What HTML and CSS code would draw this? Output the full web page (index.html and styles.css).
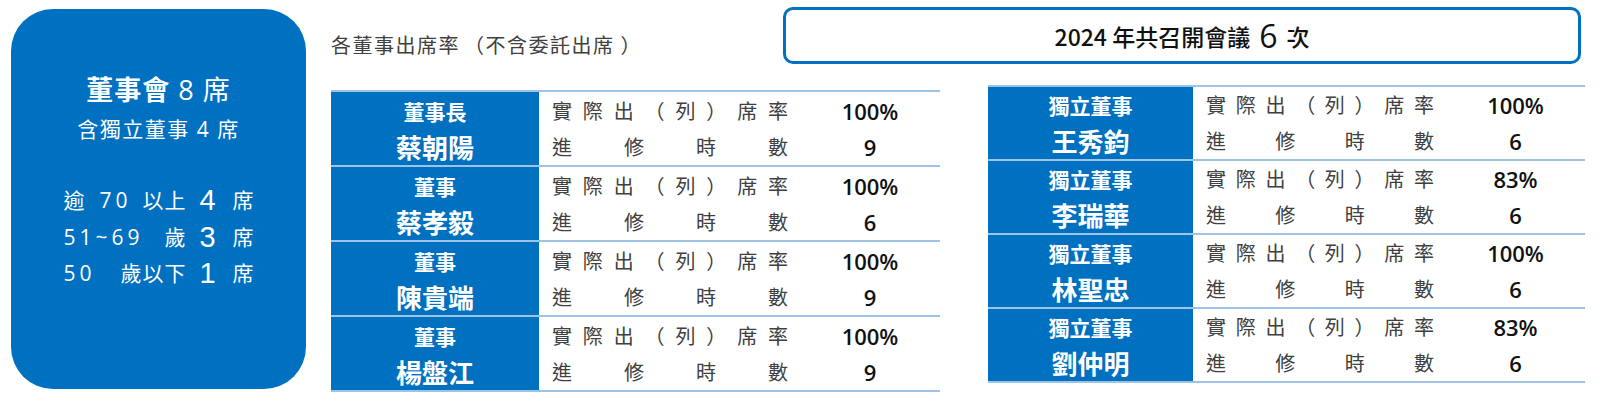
FILE: index.html
```html
<!DOCTYPE html>
<html lang="zh-Hant">
<head>
<meta charset="utf-8">
<title>董事會出席率</title>
<link rel="stylesheet" href="styles.css">
</head>
<body>
<div class="page">
  <section class="card">
    <div class="card-title"><span class="strong">董事會</span> 8 席</div>
    <div class="card-sub">含獨立董事 4 席</div>
    <div class="age-grid">
      <div class="age-label"><span>逾</span><span>70</span><span>以上</span></div>
      <div class="age-num">4</div>
      <div class="age-unit">席</div>
      <div class="age-label"><span>51~69</span><span>歲</span></div>
      <div class="age-num">3</div>
      <div class="age-unit">席</div>
      <div class="age-label"><span>50</span><span>歲以下</span></div>
      <div class="age-num">1</div>
      <div class="age-unit">席</div>
    </div>
  </section>

  <main class="main">
    <div class="top-row">
      <h2 class="caption">各董事出席率<span class="paren-open">（</span>不含委託出席<span class="paren-close">）</span></h2>
      <div class="meeting-box"><span>2024 年共召開會議</span><span class="big">6</span><span>次</span></div>
    </div>

    <div class="tables">
      <div class="table table-left">
        <div class="row">
          <div class="who"><div class="role">董事長</div><div class="name">蔡朝陽</div></div>
          <div class="labels"><div class="lab">實際出（列）席率</div><div class="lab">進修時數</div></div>
          <div class="vals"><div>100%</div><div>9</div></div>
        </div>
        <div class="row">
          <div class="who"><div class="role">董事</div><div class="name">蔡孝毅</div></div>
          <div class="labels"><div class="lab">實際出（列）席率</div><div class="lab">進修時數</div></div>
          <div class="vals"><div>100%</div><div>6</div></div>
        </div>
        <div class="row">
          <div class="who"><div class="role">董事</div><div class="name">陳貴端</div></div>
          <div class="labels"><div class="lab">實際出（列）席率</div><div class="lab">進修時數</div></div>
          <div class="vals"><div>100%</div><div>9</div></div>
        </div>
        <div class="row">
          <div class="who"><div class="role">董事</div><div class="name">楊盤江</div></div>
          <div class="labels"><div class="lab">實際出（列）席率</div><div class="lab">進修時數</div></div>
          <div class="vals"><div>100%</div><div>9</div></div>
        </div>
      </div>

      <div class="table table-right">
        <div class="row">
          <div class="who"><div class="role">獨立董事</div><div class="name">王秀鈞</div></div>
          <div class="labels"><div class="lab">實際出（列）席率</div><div class="lab">進修時數</div></div>
          <div class="vals"><div>100%</div><div>6</div></div>
        </div>
        <div class="row">
          <div class="who"><div class="role">獨立董事</div><div class="name">李瑞華</div></div>
          <div class="labels"><div class="lab">實際出（列）席率</div><div class="lab">進修時數</div></div>
          <div class="vals"><div>83%</div><div>6</div></div>
        </div>
        <div class="row">
          <div class="who"><div class="role">獨立董事</div><div class="name">林聖忠</div></div>
          <div class="labels"><div class="lab">實際出（列）席率</div><div class="lab">進修時數</div></div>
          <div class="vals"><div>100%</div><div>6</div></div>
        </div>
        <div class="row">
          <div class="who"><div class="role">獨立董事</div><div class="name">劉仲明</div></div>
          <div class="labels"><div class="lab">實際出（列）席率</div><div class="lab">進修時數</div></div>
          <div class="vals"><div>83%</div><div>6</div></div>
        </div>
      </div>
    </div>
  </main>
</div>
</body>
</html>
```

FILE: styles.css
```css
html, body {
  margin: 0;
  padding: 0;
  background: #ffffff;
}

body {
  font-family: "Noto Sans CJK TC", "Noto Sans", sans-serif;
  color: #404040;
}

.page {
  display: flex;
  align-items: flex-start;
  padding: 7px 0 0 11px;
}

/* ---------- left card ---------- */
.card {
  box-sizing: border-box;
  width: 295px;
  height: 380px;
  margin-top: 2px;
  border-radius: 42px;
  background: #0070c0;
  color: #ffffff;
  display: flex;
  flex-direction: column;
  align-items: center;
  padding-top: 62px;
  font-family: "Open Sans", "Noto Sans CJK TC", sans-serif;
}

.card-title {
  font-size: 27px;
  line-height: 36px;
  letter-spacing: 1px;
}

.card-title .strong {
  font-family: "Noto Sans CJK TC", sans-serif;
  font-weight: 700;
}

.card-sub {
  margin-top: 7px;
  font-size: 21px;
  line-height: 28px;
  letter-spacing: 1.5px;
}

.age-grid {
  margin-top: 39px;
  display: grid;
  grid-template-columns: 123px 42px auto;
  grid-auto-rows: 36.5px;
  align-items: center;
  font-size: 21px;
  line-height: 30px;
}

.age-label {
  display: flex;
  justify-content: space-between;
  letter-spacing: 4px;
}

.age-label span:last-child {
  letter-spacing: 1px;
}

.age-num {
  text-align: center;
  font-family: "Liberation Sans", sans-serif;
  font-size: 29px;
  font-weight: 400;
  line-height: 30px;
}

.age-unit {
  margin-left: 4px;
}

/* ---------- main area ---------- */
.main {
  margin-left: 25px;
  width: 1254px;
}

.top-row {
  display: grid;
  grid-template-columns: 452px 798px;
  height: 57px;
}

.caption {
  margin: 0;
  padding-top: 24px;
  font-size: 20px;
  line-height: 28px;
  font-weight: 400;
  letter-spacing: 1.5px;
  color: #404040;
}

.paren-open {
  margin-left: 4px;
}

.paren-close {
  margin-left: 6px;
}

.meeting-box {
  box-sizing: border-box;
  height: 57px;
  border: 3px solid #0070c0;
  border-radius: 10px;
  display: flex;
  align-items: center;
  justify-content: center;
  gap: 9px;
  font-size: 23px;
  font-weight: 500;
  color: #111111;
}

.meeting-box .big {
  font-family: "Open Sans", sans-serif;
  font-size: 32px;
  font-weight: 500;
  line-height: 1;
}

.tables {
  display: grid;
  grid-template-columns: 609px 597px;
  column-gap: 48px;
  align-items: start;
}

.table {
  border-top: 2px solid #9dc3e6;
}

.table-left {
  margin-top: 26px;
}

.table-right {
  margin-top: 21px;
}

.row {
  display: grid;
  border-bottom: 2px solid #9dc3e6;
}

.table-left .row {
  height: 73px;
  grid-template-columns: 208px 261px 1fr;
}

.table-right .row {
  height: 72px;
  grid-template-columns: 205px 253px 1fr;
}

.who {
  background: #0070c0;
  color: #ffffff;
  font-weight: 700;
  display: flex;
  flex-direction: column;
  align-items: center;
  justify-content: center;
}

.role {
  font-size: 21px;
  line-height: 36px;
}

.name {
  font-size: 26px;
  line-height: 36px;
}

.labels {
  display: flex;
  flex-direction: column;
  justify-content: center;
  padding: 0 12px 0 13px;
}

.lab {
  font-size: 20px;
  line-height: 36px;
  text-align: justify;
  text-align-last: justify;
  text-justify: inter-character;
  color: #404040;
}

.vals {
  display: flex;
  flex-direction: column;
  justify-content: center;
  align-items: center;
  font-family: "Open Sans", sans-serif;
  font-weight: 600;
  font-size: 22px;
  line-height: 36px;
  color: #111111;
}
```
